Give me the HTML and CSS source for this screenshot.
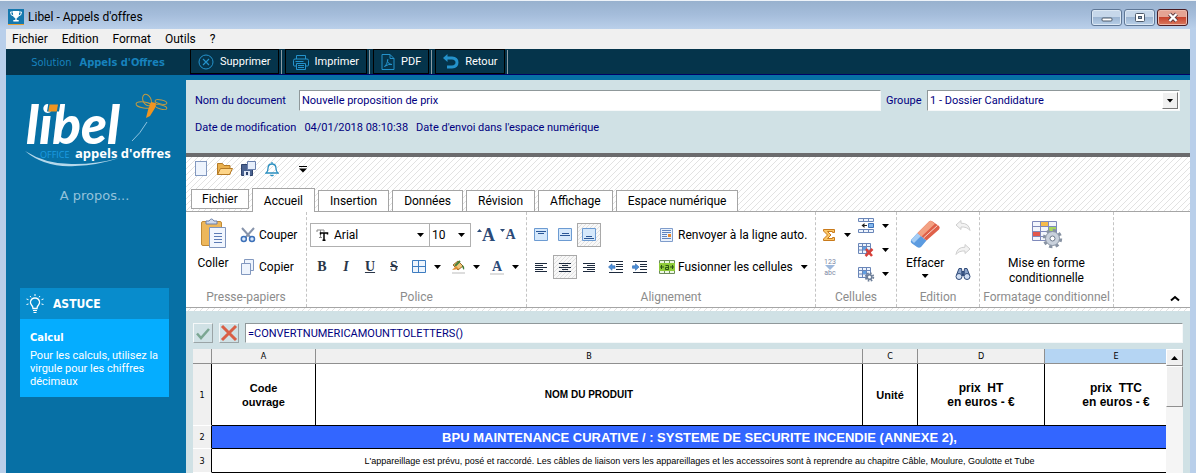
FILE: index.html
```html
<!DOCTYPE html>
<html lang="fr">
<head>
  <meta charset="UTF-8" />
  <meta name="viewport" content="width=device-width, initial-scale=1" />
  <title>Libel - Appels d'offres</title>
  <link rel="stylesheet" href="styles.css">
</head>
<body>

  <!-- Title bar -->
  <header class="titlebar">
    <svg class="app-icon" width="16" height="16" viewBox="0 0 16 16">
      <rect width="16" height="16" fill="#1578ae"/>
      <rect y="15" width="16" height="1" fill="#e8a13a"/>
      <path d="M5 2h6v3.500q0 3-2.300 3.800v1.700h2v1.500H5.300V11h2V9.300Q5 8.500 5 5.500z" fill="#fff"/>
      <path d="M5 3H2.500q0 4 3.500 4M11 3h2.500q0 4-3.500 4" fill="none" stroke="#fff"/>
    </svg>
    <span class="window-title">Libel - Appels d'offres</span>
    <div class="window-buttons">
      <button class="win-btn" aria-label="Réduire">
        <svg width="12" height="11" viewBox="0 0 12 11"><rect x="1" y="6" width="10" height="3" rx="1" fill="#fff" stroke="#4d5a6b"/></svg>
      </button>
      <button class="win-btn" aria-label="Agrandir">
        <svg width="12" height="11" viewBox="0 0 12 11"><rect x="1.500" y="1.500" width="9" height="8" rx="1" fill="#fff" stroke="#4d5a6b"/><rect x="4.500" y="4.500" width="3" height="2" fill="#8aa5c4" stroke="#4d5a6b"/></svg>
      </button>
      <button class="win-btn win-close" aria-label="Fermer">
        <svg width="12" height="11" viewBox="0 0 12 11"><path d="M2.500 2l7 7M9.500 2l-7 7" stroke="#5b3a40" stroke-width="4"/><path d="M2.500 2l7 7M9.500 2l-7 7" stroke="#fff" stroke-width="2.400"/></svg>
      </button>
    </div>
  </header>

  <div class="window">

    <nav class="menubar">
      <button>Fichier</button>
      <button>Edition</button>
      <button>Format</button>
      <button>Outils</button>
      <button>?</button>
    </nav>

    <div class="toolbar">
      <div class="brand">Solution <strong>Appels d'Offres</strong></div>
      <div class="actions">
        <button class="action">
          <svg width="16" height="16" viewBox="0 0 16 16" fill="none" stroke="#2492cb"><circle cx="8" cy="8" r="7"/><path d="M5 5l6 6M11 5l-6 6" stroke-width="1.200"/></svg>
          Supprimer
        </button>
        <button class="action">
          <svg width="16" height="16" viewBox="0 0 16 16" fill="none" stroke="#2492cb"><path d="M3.500 5V1.500h9V5M3.500 12H1.500Q.5 12 .5 11V6.500Q.5 5 2 5h12q1.500 0 1.500 1.500V11q0 1-1 1h-2"/><path d="M3.500 9.500h9v6h-9zM5 11.500h6M5 13.500h6M2.500 7.500h8"/></svg>
          Imprimer
        </button>
        <button class="action">
          <svg width="14" height="16" viewBox="0 0 14 16" fill="none" stroke="#2492cb"><path d="M1 .5h8l4 4v11H1zM9 .5v4h4"/><path d="M3.500 12.500Q6 11 7 5.500Q6 5 6.500 7.500Q7.500 10.500 11 10.500Q8 9.500 3.500 12.500"/></svg>
          PDF
        </button>
        <button class="action">
          <svg width="16" height="16" viewBox="0 0 16 16" fill="none" stroke="#2492cb"><path d="M3 4h6q5 .5 5 4.500T9 13H4" stroke-width="3"/><path d="M4.500 0v8L0 4z" fill="#2492cb" stroke="none"/></svg>
          Retour
        </button>
      </div>
    </div>

    <div class="main">

      <aside class="sidebar">
        <svg class="logo" width="152" height="78" viewBox="0 0 152 78">
          <text class="logo-name" x="6" y="54">libel</text>
          <path d="M28.500 12.500h12l-1.500 9h-12z" fill="#0770a5"/>
          <path d="M29.500 14.500h8.500l-1.200 7h-8.500z" fill="#ef9420"/>
          <text class="logo-office" x="20" y="68">OFFICE</text>
          <text class="logo-product" x="55" y="68">appels d'offres</text>
          <path d="M5 61q20 17 50 15q24-1 44-8q-22 6-44 6Q27 75 5 61z" fill="#b5d8eb"/>
          <path d="M112 51q8-7 15-19" fill="none" stroke="#8fc3df"/>
          <g fill="none" stroke="#c09a42">
            <ellipse cx="127" cy="10" rx="4" ry="6" transform="rotate(-25 127 10)"/>
            <ellipse cx="124" cy="15" rx="8" ry="3" transform="rotate(8 124 15)"/>
            <ellipse cx="141" cy="12" rx="6" ry="2" transform="rotate(12 141 12)"/>
            <ellipse cx="141" cy="17" rx="6" ry="2" transform="rotate(15 141 17)"/>
          </g>
          <path d="M131 12l5 1l-1 5l-5 8l-4 2l2-8z" fill="#ef9420"/>
        </svg>
        <a class="about" href="#">A propos...</a>

        <section class="tip">
          <h2 class="tip-title">
            <svg width="18" height="20" viewBox="0 0 18 20" fill="none" stroke="#fff"><path d="M7 14.500Q7 12.500 5.500 11Q4 9 4.500 7.500Q5.500 4 9 4t4.500 3.500Q14 9 12.500 11Q11 12.500 11 14.500z" stroke-width="1.300"/><path d="M7 16.500h4M7.500 18.500h3M9 0v2M4 2l1 1.300M14 2l-1 1.300M.5 5l2 .7M17.500 5l-2 .7M.5 10.500l2-.5M17.500 10.500l-2-.5"/></svg>
            ASTUCE
          </h2>
          <div class="tip-body">
            <h3>Calcul</h3>
            <p>Pour les calculs, utilisez la virgule pour les chiffres décimaux</p>
          </div>
        </section>
      </aside>

      <main class="content">

        <form class="document-form">
          <div class="field-row">
            <label class="name-label" for="docName">Nom du document</label>
            <input class="sunken name-input" id="docName" type="text" value="Nouvelle proposition de prix">
            <label class="group-label" for="docGroup">Groupe</label>
            <div class="sunken group-select">
              <select id="docGroup"><option>1 - Dossier Candidature</option></select>
              <span class="drop-button"><i class="caret"></i></span>
            </div>
          </div>
          <p class="dates"><span>Date de modification</span><span>04/01/2018 08:10:38</span><span>Date d'envoi dans l'espace numérique</span></p>
        </form>

        <section class="ribbon">
          <div class="quick-access">
            <button aria-label="Nouveau"><svg width="14" height="16" viewBox="0 0 14 16"><rect x="1.500" y=".5" width="11" height="14" fill="#eef4fd" stroke="#8298bf"/></svg></button>
            <button aria-label="Ouvrir"><svg width="17" height="16" viewBox="0 0 17 16"><path d="M1.500 13.500v-11h5l1.500 2h6v9z" fill="#e9b04e" stroke="#b57a25"/><path d="M1.500 13.500l3-6h12l-3 6z" fill="#fdd589" stroke="#b57a25"/></svg></button>
            <button aria-label="Enregistrer"><svg width="16" height="16" viewBox="0 0 16 16"><path d="M.5 3.500h11v11h-11z" fill="#4b6390" stroke="#2e426b"/><path d="M3 10h6v5H3z" fill="#dfe7f5"/><path d="M5 11h2v3H5z" fill="#2e426b"/><path d="M6.500 .5h8v8h-8z" fill="#e6eefb" stroke="#6a80ad"/></svg></button>
            <button aria-label="Alertes"><svg width="14" height="16" viewBox="0 0 14 16" fill="none" stroke="#2a8fc0" stroke-width="1.300"><path d="M1 12q2-1.500 2-4.500Q3 3 7 3t4 4.500Q11 10.500 13 12zM7 1v2M5.500 14q1.500 1.300 3 0"/></svg></button>
            <button class="more" aria-label="Personnaliser"><svg width="8" height="8" viewBox="0 0 8 8"><path d="M0 1.500h8" stroke="#000"/><path d="M0 3.500h8L4 7.500z"/></svg></button>
          </div>

          <div class="tabs" role="tablist">
            <button class="tab file-tab" role="tab">Fichier</button>
            <button class="tab selected" role="tab" aria-selected="true">Accueil</button>
            <button class="tab" role="tab">Insertion</button>
            <button class="tab" role="tab">Données</button>
            <button class="tab" role="tab">Révision</button>
            <button class="tab" role="tab">Affichage</button>
            <button class="tab" role="tab">Espace numérique</button>
          </div>

          <div class="groups">

            <!-- Presse-papiers -->
            <div class="group">
              <div class="group-body clipboard">
                <button class="big-btn">
                  <svg width="30" height="32" viewBox="0 0 30 32"><rect x="3.500" y="3.500" width="20" height="24" rx="1.500" fill="#edb75b" stroke="#c18a35"/><path d="M8 6V3h3q2.500-4 5 0h3v3z" fill="#cfdaed" stroke="#6b7fa8"/><path d="M11.500 9.500h16v20h-16z" fill="#f1f6fe" stroke="#7f95bd"/><path d="M16 15.500h8M16 18.500h8M16 21.500h8M16 24.500h8" stroke="#5c7bb5"/></svg>
                  Coller
                </button>
                <div class="stack">
                  <button class="text-btn"><svg width="16" height="16" viewBox="0 0 16 16"><path d="M2 1l8.500 9.500M14 1L5.500 10.500" stroke="#8794ab" stroke-width="2"/><circle cx="3.800" cy="12" r="2.500" fill="#dbe9fb" stroke="#3c70b8" stroke-width="1.500"/><circle cx="12" cy="12" r="2.500" fill="#dbe9fb" stroke="#3c70b8" stroke-width="1.500"/></svg>Couper</button>
                  <button class="text-btn"><svg width="16" height="16" viewBox="0 0 16 16" fill="#eef4fd" stroke="#8298bf"><path d="M4.500 .5h9v11h-9z"/><path d="M1.500 4.500h9v11h-9z"/></svg>Copier</button>
                </div>
              </div>
              <div class="group-name">Presse-papiers</div>
            </div>

            <!-- Police -->
            <div class="group">
              <div class="group-body stack">
                <div class="row">
                  <div class="combo font-combo">
                    <svg width="13" height="12" viewBox="0 0 13 12" fill="none"><path d="M1 3V1h7v2M4.500 1v7M3 8.500h3" stroke="#888"/><path d="M4.500 5.500V4h7v1.500M8 4v7M6.500 11.300h3" stroke="#000" stroke-width="1.500"/></svg>
                    <select aria-label="Police"><option>Arial</option></select>
                    <i class="caret"></i>
                  </div>
                  <div class="combo size-combo">
                    <select aria-label="Taille"><option>10</option></select>
                    <i class="caret"></i>
                  </div>
                  <button class="icon-btn grow" aria-label="Agrandir la police"><svg width="5" height="4" viewBox="0 0 5 4"><path d="M0 3h5L2.500 0z" fill="#2b4a78"/></svg>A</button>
                  <button class="icon-btn shrink" aria-label="Réduire la police"><svg width="5" height="4" viewBox="0 0 5 4"><path d="M0 0h5L2.500 3z" fill="#2b4a78"/></svg>A</button>
                </div>
                <div class="row">
                  <button class="icon-btn letter">B</button>
                  <button class="icon-btn letter italic">I</button>
                  <button class="icon-btn letter underline">U</button>
                  <button class="icon-btn letter strike">S</button>
                  <button class="split-btn" aria-label="Bordures"><svg width="14" height="14" viewBox="0 0 14 14"><path d="M.5 .5h13v12H.5zM.5 6.500h13M6.500 .5v12" fill="#eef5fd" stroke="#3d7cc0"/></svg><i class="caret"></i></button>
                  <button class="split-btn" aria-label="Remplissage"><svg width="15" height="15" viewBox="0 0 15 15"><path d="M2 5l5-4 5 5-5 4z" fill="#f2c67a" stroke="#9a6a2a"/><path d="M4 6L9 1" stroke="#49803a" stroke-width="2"/><path d="M11 5q3 1 2 5q-2-2-2-5z" fill="#3f7a35"/><path d="M1 10l4-4 3 3z" fill="#e08d33"/><path d="M1 13h13" stroke="#ddd" stroke-width="2"/></svg><i class="caret"></i></button>
                  <button class="split-btn color" aria-label="Couleur"><span>A</span><i class="caret"></i></button>
                </div>
              </div>
              <div class="group-name">Police</div>
            </div>

            <!-- Alignement -->
            <div class="group">
              <div class="group-body alignment">
                <div class="row">
                  <button class="icon-btn" aria-label="Haut"><svg width="14" height="14" viewBox="0 0 14 14"><path d="M.5 .5h13v12H.5z" fill="#d5e8fb" stroke="#6c9bd2"/><path d="M2 3.500h10M4 5.500h6" stroke="#2a5696"/></svg></button>
                  <button class="icon-btn" aria-label="Milieu"><svg width="14" height="14" viewBox="0 0 14 14"><path d="M.5 .5h13v12H.5z" fill="#d5e8fb" stroke="#6c9bd2"/><path d="M4 5.500h7M2 7.500h10" stroke="#2a5696"/></svg></button>
                  <button class="icon-btn pressed" aria-label="Bas"><svg width="14" height="14" viewBox="0 0 14 14"><path d="M.5 .5h13v12H.5z" fill="#d5e8fb" stroke="#6c9bd2"/><path d="M4 8.500h6M2 10.500h10" stroke="#2a5696"/></svg></button>
                </div>
                <button class="text-btn"><svg width="16" height="16" viewBox="0 0 16 16"><path d="M1.500 1.500h12v13h-12z" fill="#eaf2fd" stroke="#7f9ccb"/><path d="M3 3.500h9M3 5.500h9M3 7.500h5M3 9.500h5M3 11.500h9" stroke="#5f83bd"/><path d="M9 7h3v3H9z" fill="#e78a2e"/></svg>Renvoyer à la ligne auto.</button>
                <div class="row">
                  <button class="icon-btn" aria-label="Gauche"><svg width="12" height="11" viewBox="0 0 12 11"><path d="M0 1.500h12M0 3.500h8M0 5.500h12M0 7.500h8M0 9.500h12" stroke="#1d2a3d"/></svg></button>
                  <button class="icon-btn pressed" aria-label="Centrer"><svg width="12" height="11" viewBox="0 0 12 11"><path d="M0 1.500h12M3 3.500h6M0 5.500h12M3 7.500h6M0 9.500h12" stroke="#1d2a3d"/></svg></button>
                  <button class="icon-btn" aria-label="Droite"><svg width="12" height="11" viewBox="0 0 12 11"><path d="M0 1.500h12M4 3.500h8M0 5.500h12M4 7.500h8M0 9.500h12" stroke="#1d2a3d"/></svg></button>
                  <button class="icon-btn indent" aria-label="Diminuer le retrait"><svg width="16" height="12" viewBox="0 0 16 12"><path d="M1 .5h14M8 3.500h7M8 5.500h7M8 8.500h7M1 11.500h14" stroke="#1d2a3d"/><path d="M.5 6L4 2.800v2h3v2.500H4v2z" fill="#4d8fd8" stroke="#2c66ad" stroke-width=".6"/></svg></button>
                  <button class="icon-btn" aria-label="Augmenter le retrait"><svg width="16" height="12" viewBox="0 0 16 12"><path d="M1 .5h14M8 3.500h7M8 5.500h7M8 8.500h7M1 11.500h14" stroke="#1d2a3d"/><path d="M7 6L3.500 2.800v2h-3v2.500h3v2z" fill="#4d8fd8" stroke="#2c66ad" stroke-width=".6"/></svg></button>
                </div>
                <button class="text-btn"><svg width="16" height="14" viewBox="0 0 16 14"><path d="M.5 .5h15v13H.5z" fill="#eef7e4" stroke="#6d8c5a"/><path d="M5.500 0v3M10.500 0v3M5.500 11v3M10.500 11v3" stroke="#6d8c5a"/><path d="M0 3h16v8H0z" fill="#8fcb3a"/><path d="M1 7h4M11 7h4M2.500 5v4M13.500 5v4M6.500 5.500h3v4h-3v-2h3" stroke="#2b5415" fill="none"/></svg>Fusionner les cellules<i class="caret"></i></button>
              </div>
              <div class="group-name">Alignement</div>
            </div>

            <!-- Cellules -->
            <div class="group">
              <div class="group-body cells">
                <div class="stack">
                  <button class="split-btn" aria-label="Somme"><svg width="14" height="14" viewBox="0 0 14 14"><path d="M1.500 1.500h11v3h-2v-1H5.500L9 7l-3.500 3.500h5v-1h2v3h-11v-1.500L5.500 7l-4-4z" fill="#fbc766" stroke="#c97a1b"/></svg><i class="caret"></i></button>
                  <button class="icon-btn numbers" aria-label="Format de nombre"><span>123</span><svg width="10" height="5" viewBox="0 0 10 5"><path d="M0 0h10L5 5z" fill="#9db8dc"/></svg><span>abc</span></button>
                </div>
                <div class="triple">
                  <button class="split-btn" aria-label="Insérer"><svg width="17" height="16" viewBox="0 0 17 16"><path d="M.5 .5h15v3H.5zM5.500 .5v3M10.500 .5v3M.5 11.500h15v3H.5zM5.500 11.500v3M10.500 11.500v3" fill="#eef4fd" stroke="#6a86b8"/><path d="M10.500 5.500h5v4h-5z" fill="#82b6ec" stroke="#3c70b8"/><path d="M9 7.500H5" stroke="#222"/><path d="M6.500 5v5L3.500 7.500z" fill="#222"/></svg><i class="caret"></i></button>
                  <button class="split-btn" aria-label="Supprimer"><svg width="17" height="16" viewBox="0 0 17 16"><path d="M.5 1.500h12v10H.5zM.5 4.500h12M.5 8h12M4.500 1.500v10M8.500 1.500v10" fill="#eef4fd" stroke="#6a86b8"/><path d="M5 5h3v3H5z" fill="#62a0e2"/><path d="M8 7l6 7M14.500 7l-7 7" stroke="#d6403a" stroke-width="2.500"/></svg><i class="caret"></i></button>
                  <button class="split-btn" aria-label="Format"><svg width="17" height="16" viewBox="0 0 17 16"><path d="M.5 1.500h12v10H.5zM.5 4.500h12M.5 8h12M4.500 1.500v10M8.500 1.500v10" fill="#eef4fd" stroke="#6a86b8"/><path d="M5 5h3v3H5z" fill="#62a0e2"/><circle cx="11.500" cy="11" r="3.800" fill="none" stroke="#6e7f99" stroke-width="1.800" stroke-dasharray="1.600 1.400"/><circle cx="11.500" cy="11" r="2.300" fill="#fff" stroke="#6e7f99" stroke-width="1.600"/></svg><i class="caret"></i></button>
                </div>
              </div>
              <div class="group-name">Cellules</div>
            </div>

            <!-- Edition -->
            <div class="group">
              <div class="group-body editing">
                <button class="big-btn">
                  <svg width="32" height="32" viewBox="0 0 32 32"><path d="M2 22L8.500 15l9 7.500L12 29q-2 1.500-4 0l-5-3.500q-2-1.500-1-3.500z" fill="#5b9be0"/><path d="M2 22L8.500 15l3.500 3L5 25z" fill="#a5cdf5"/><path d="M8.500 15L20 3.500q1.500-1.500 3.500 0L30 8q1.500 1.500 0 3.500L17.500 22.500z" fill="#df6049"/><path d="M8.500 15L20 3.500q1.500-1.500 3 0l3 2.300L12.500 18.500z" fill="#f3a183"/><path d="M14.500 20L28.500 7.500" stroke="#f8d5cb"/></svg>
                  Effacer
                  <i class="caret"></i>
                </button>
                <div class="triple">
                  <button class="icon-btn" aria-label="Annuler"><svg width="16" height="14" viewBox="0 0 16 14"><path d="M1 6l5-4.500v2.700Q14 4 15 11.500Q12 7.500 6 8v2.500z" fill="#f2f2f2" stroke="#cfcfcf"/></svg></button>
                  <button class="icon-btn" aria-label="Rétablir"><svg width="16" height="14" viewBox="0 0 16 14"><path d="M15 6l-5-4.500v2.700Q2 4 1 11.500Q4 7.500 10 8v2.500z" fill="#f2f2f2" stroke="#cfcfcf"/></svg></button>
                  <button class="icon-btn" aria-label="Rechercher"><svg width="16" height="14" viewBox="0 0 16 14" stroke="#2f4a78"><path d="M1.500 8L4 1.500h2.500L7.500 9M14.500 8L12 1.500H9.500L8.500 9" fill="#8ea6cb"/><path d="M7 4.500h2v3H7z" fill="#4d6796"/><circle cx="4" cy="9.500" r="3" fill="#d2e0f4"/><circle cx="12" cy="9.500" r="3" fill="#d2e0f4"/></svg></button>
                </div>
              </div>
              <div class="group-name">Edition</div>
            </div>

            <!-- Formatage conditionnel -->
            <div class="group">
              <div class="group-body formatting">
                <button class="big-btn">
                  <svg width="32" height="32" viewBox="0 0 32 32"><path d="M1.500 3.500h24v19h-24z" fill="#f3f6fc"/><path d="M10 4h8v5h-8z" fill="#f6bb4c"/><path d="M18 9h7v5h-7z" fill="#a8d65c"/><path d="M2 13h8v5H2z" fill="#e2574c"/><path d="M1.500 3.500h24v19h-24zM1.500 8.500h24M1.500 13.500h24M1.500 18.500h24M9.500 3.500v19M17.500 3.500v19" stroke="#7f8abb" fill="none"/><circle cx="21.500" cy="20.500" r="8.200" fill="none" stroke="#8893a3" stroke-width="3" stroke-dasharray="3.300 3.140"/><circle cx="21.500" cy="20.500" r="7" fill="#c9d1dc" stroke="#8893a3"/><circle cx="21.500" cy="20.500" r="2.500" fill="#fff" stroke="#6f7b8c"/></svg>
                  Mise en forme<br>conditionnelle
                </button>
              </div>
              <div class="group-name">Formatage conditionnel</div>
            </div>

            <button class="collapse" aria-label="Réduire le ruban"><svg width="10" height="7" viewBox="0 0 10 7"><path d="M1 5.500L5 2l4 3.500" fill="none" stroke="#000" stroke-width="2"/></svg></button>
          </div>
        </section>

        <div class="formula-bar">
          <button class="formula-btn" aria-label="Valider"><svg width="16" height="16" viewBox="0 0 16 16"><path d="M2 8.500l4 4.500L14 4" fill="none" stroke="#7ba692" stroke-width="2.500"/></svg></button>
          <button class="formula-btn" aria-label="Annuler la saisie"><svg width="18" height="18" viewBox="0 0 18 18"><path d="M2 2l14 14M16 2L2 16" stroke="#d95f45" stroke-width="3"/></svg></button>
          <input class="sunken formula-input" type="text" aria-label="Formule" value="=CONVERTNUMERICAMOUNTTOLETTERS()">
        </div>

        <div class="sheet">
          <div class="sheet-view">
            <table>
              <colgroup>
                <col class="col-num"><col class="col-a"><col><col class="col-c"><col class="col-d"><col class="col-e">
              </colgroup>
              <thead>
                <tr><th></th><th>A</th><th>B</th><th>C</th><th>D</th><th class="active">E</th></tr>
              </thead>
              <tbody>
                <tr class="titles">
                  <th>1</th>
                  <td>Code<br>ouvrage</td>
                  <td class="product">NOM DU PRODUIT</td>
                  <td>Unité</td>
                  <td class="price">prix&nbsp; HT<br>en euros - €</td>
                  <td class="price">prix&nbsp; TTC<br>en euros - €</td>
                </tr>
                <tr class="section">
                  <th>2</th>
                  <td colspan="5">BPU MAINTENANCE CURATIVE / : SYSTEME DE SECURITE INCENDIE (ANNEXE 2),</td>
                </tr>
                <tr class="note">
                  <th>3</th>
                  <td colspan="5">L'appareillage est prévu, posé et raccordé. Les câbles de liaison vers les appareillages et les accessoires sont à reprendre au chapitre Câble, Moulure, Goulotte et Tube</td>
                </tr>
              </tbody>
            </table>
          </div>
          <div class="scrollbar">
            <button class="scroll-up" aria-label="Défiler vers le haut"><svg width="7" height="4" viewBox="0 0 7 4"><path d="M0 4h7L3.500 0z"/></svg></button>
            <div class="scroll-thumb"></div>
          </div>
        </div>

      </main>
    </div>
  </div>

</body>
</html>
```
FILE: styles.css
```css
* {
  box-sizing: border-box;
}
body {
  margin: 0;
  height: 100vh;
  overflow: hidden;
  display: flex;
  flex-direction: column;
  background: #b9cfea;
  font-family: Roboto, sans-serif;
  font-size: 11px;
  color: #000;
}

button, input, select {
  font: inherit;
  color: inherit;
}
button {
  padding: 0;
  border: none;
  background: none;
  white-space: nowrap;
}
svg {
  display: block;
  flex: none;
}

/* Title bar */
.titlebar {
  flex: none;
  height: 29px;
  display: flex;
  align-items: center;
  gap: 4px;
  padding: 4px 8px 0 8px;
  border-top: 1px solid #eef3f9;
  background: linear-gradient(#98b1ce, #a5bddb 50%, #bad0ea);
}
.window-title {
  font-size: 12px;
  flex: 1;
}
.window-buttons {
  display: flex;
  gap: 2px;
}
.win-btn {
  width: 31px;
  height: 17px;
  display: flex;
  align-items: center;
  justify-content: center;
  border: 1px solid #5f7796;
  border-radius: 3px;
  background: linear-gradient(#c6d7ea 50%, #9cb5d2 50%, #b8cfe8);
  box-shadow: inset 0 0 0 1px #dce8f4;
}
.win-close {
  border-color: #4a1c22;
  background: linear-gradient(#e5a494 50%, #c8442e 50%, #d97a5f);
  box-shadow: inset 0 0 0 1px #ecb9ab;
}

.window {
  flex: 1;
  min-height: 0;
  margin: 0 6px;
  display: flex;
  flex-direction: column;
}

.menubar {
  flex: none;
  height: 20px;
  display: flex;
  align-items: center;
  gap: 14px;
  padding: 0 6px;
  background: #f0f0f0;
  font-size: 12px;
}

/* Dark toolbar */
.toolbar {
  flex: none;
  height: 26px;
  display: flex;
  background: #05344b;
  color: #fff;
}
.brand {
  width: 184px;
  display: flex;
  align-items: center;
  justify-content: center;
  gap: 8px;
  font-family: "DejaVu Sans Condensed", "DejaVu Sans", sans-serif;
  color: #1782bd;
}
.actions {
  flex: 1;
  display: flex;
  gap: 6px;
  border-bottom: 1px solid #000066;
}
.action {
  display: flex;
  align-items: center;
  gap: 6px;
  height: 25px;
  padding: 0 7px;
  border: 1px solid #000;
  position: relative;
}
/* divider between two actions */
.action::after {
  content: "";
  position: absolute;
  top: 0;
  right: -4px;
  width: 1px;
  height: 24px;
  background: #8d9ca5;
}

.main {
  flex: 1;
  min-height: 0;
  display: flex;
}

/* Sidebar */
.sidebar {
  width: 180px;
  flex: none;
  display: flex;
  flex-direction: column;
  padding: 15px 17px 0 14px;
  background: #0770a5;
}
.logo-name {
  font: italic 900 53px Lato, sans-serif;
  fill: #fff;
}
.logo-office {
  font: 9px "Open Sans", sans-serif;
  fill: #1d9de2;
}
.logo-product {
  font: bold 13px "Open Sans", sans-serif;
  fill: #fff;
}
.about {
  align-self: center;
  margin-top: 20px;
  font-family: "DejaVu Sans", sans-serif;
  font-size: 13px;
  line-height: 16px;
  color: #94c2db;
  text-decoration: none;
}
.tip {
  margin-top: 84px;
  color: #fff;
}
.tip-title {
  margin: 0;
  height: 31px;
  display: flex;
  align-items: center;
  gap: 9px;
  padding-left: 6px;
  background: #088ccc;
  font-family: "DejaVu Sans Condensed", "DejaVu Sans", sans-serif;
  font-size: 12px;
}
.tip-body {
  padding: 11px 10px;
  height: 78px;
  background: #05adff;
}
.tip-body h3 {
  margin: 0 0 3px;
  font-family: "DejaVu Sans Condensed", "DejaVu Sans", sans-serif;
  font-size: 11px;
  line-height: 16px;
}
.tip-body p {
  margin: 0;
  line-height: 13px;
}

/* Document form */
.content {
  flex: 1;
  min-width: 0;
  display: flex;
  flex-direction: column;
  border-top: 5px solid #0770a5;
  background: #d0e1e5;
}
.sunken {
  border: 1px solid;
  border-color: #8f989a #f5f8f9 #f5f8f9 #8f989a;
  border-radius: 0;
  background: #fff;
}
.document-form {
  flex: none;
  height: 73px;
  padding: 10px 10px 0 9px;
  color: #000080;
}
.field-row {
  display: flex;
  align-items: center;
}
.name-label {
  width: 104px;
}
.name-input {
  flex: 1;
  min-width: 0;
  height: 21px;
  padding: 0 2px;
}
.group-label {
  width: 46px;
  padding-left: 5px;
}
.group-select {
  width: 253px;
  height: 21px;
  display: flex;
  align-items: center;
}
.group-select select {
  flex: 1;
  height: 19px;
  appearance: none;
  border: none;
  background: none;
  padding: 0 2px;
}
.drop-button {
  width: 16px;
  height: 17px;
  margin-right: 1px;
  display: flex;
  align-items: center;
  justify-content: center;
  border: 1px solid;
  border-color: #fff #777 #777 #fff;
  background: #f0f0f0;
}
.dates {
  display: flex;
  gap: 8px;
  margin: 10px 0 0;
  line-height: 14px;
}
.caret {
  flex: none;
  width: 7px;
  height: 4px;
  background: #000;
  clip-path: polygon(0 0, 100% 0, 50% 100%);
}

/* Ribbon */
.ribbon {
  flex: none;
  border-top: 4px solid #6b6b6d;
  padding-bottom: 3px;
  background: #fff linear-gradient(135deg, transparent 43%, #e2e2e2 50%, transparent 57%) 0 0 / 6px 6px;
  font-size: 12px;
}
.quick-access {
  height: 24px;
  display: flex;
  align-items: center;
  gap: 8px;
  padding-left: 8px;
}
.more {
  margin-left: 12px;
}
.tabs {
  height: 31px;
  display: flex;
  align-items: flex-end;
  gap: 3px;
  padding-left: 5px;
  border-bottom: 1px solid #a5a5a5;
}
.tab {
  height: 21px;
  padding: 0 11px;
  border: 1px solid #a5a5a5;
  border-bottom: none;
  background: #fff;
}
.file-tab {
  height: 20px;
  padding: 0 10px;
  margin-bottom: 2px;
  border-bottom: 1px solid #a5a5a5;
}
.tab.selected {
  height: 24px;
  margin-bottom: -1px;
}
.groups {
  height: 96px;
  display: grid;
  grid-template-columns: 121px 220px 289px 81px 83px 134px 1fr;
  border-bottom: 1px solid #a5a5a5;
  background: #fff;
}
.group {
  min-width: 0;
  display: flex;
  flex-direction: column;
  border-right: 1px dashed #c4c4c4;
}
.group-body {
  height: 76px;
}
.group-name {
  line-height: 18px;
  text-align: center;
  white-space: nowrap;
  color: #8c8c8c;
}
.row {
  display: flex;
  align-items: center;
  height: 24px;
}
.stack {
  display: flex;
  flex-direction: column;
  gap: 8px;
  padding-top: 11px;
}
.group-body.stack {
  padding-left: 3px;
}
.big-btn {
  display: flex;
  flex-direction: column;
  align-items: center;
  padding-top: 6px;
  line-height: 15px;
}
.big-btn svg {
  margin-bottom: 6px;
}
.text-btn {
  height: 24px;
  display: flex;
  align-items: center;
  gap: 3px;
}
.text-btn .caret {
  margin-left: 5px;
}
.icon-btn {
  width: 24px;
  height: 24px;
  display: flex;
  align-items: center;
  justify-content: center;
}
.icon-btn.pressed {
  border: 1px solid #a9a9a9;
  background: #f8f8f8 linear-gradient(135deg, transparent 40%, #e0e0e0 50%, transparent 60%) 0 0 / 4px 4px;
}
.split-btn {
  width: 39px;
  height: 24px;
  display: flex;
  align-items: center;
  justify-content: space-between;
  padding: 0 4px 0 6px;
}
.clipboard {
  display: flex;
  gap: 9px;
  padding-left: 9px;
}
.clipboard .big-btn {
  width: 36px;
}
.combo {
  height: 24px;
  display: flex;
  align-items: center;
  padding: 0 5px;
  border: 1px solid #b0b0b0;
  background: #fff;
}
.combo select {
  flex: 1;
  min-width: 0;
  padding: 0;
  border: none;
  background: none;
  appearance: none;
}
.font-combo {
  width: 120px;
  gap: 5px;
}
.size-combo {
  width: 41px;
  padding-left: 2px;
  border-left: none;
}
.grow, .shrink, .letter, .color {
  font-family: "Liberation Serif", serif;
  font-weight: bold;
}
.grow, .shrink {
  color: #2b4a78;
}
.grow svg, .shrink svg {
  align-self: flex-start;
  margin-top: 6px;
}
.grow {
  margin-left: 3px;
  font-size: 18px;
}
.shrink {
  width: 20px;
  font-size: 14px;
}
.letter {
  font-size: 14px;
  color: #2a3648;
}
.italic {
  font-style: italic;
}
.underline {
  text-decoration: underline;
}
.strike {
  text-decoration: line-through;
}
.color span {
  width: 14px;
  font-size: 14px;
  line-height: 13px;
  color: #2b4a78;
  border-bottom: 2px solid #ddd;
}
.alignment {
  display: grid;
  grid-template-columns: 130px 1fr;
  grid-auto-rows: 24px;
  row-gap: 8px;
  padding: 11px 0 0 2px;
}
.indent {
  margin-left: 3px;
}
.cells {
  display: flex;
}
.cells .stack .split-btn {
  width: 38px;
  padding-right: 3px;
}
.numbers {
  margin-left: 2px;
  flex-direction: column;
  font-size: 7px;
  line-height: 6px;
  color: #7d8aa5;
}
.triple {
  display: flex;
  flex-direction: column;
  padding-top: 2px;
}
.cells .triple .split-btn {
  width: 39px;
  padding-left: 4px;
}
.editing {
  display: flex;
  justify-content: space-between;
  padding: 0 4px 0 9px;
}
.formatting {
  display: flex;
  justify-content: center;
}
.editing .caret {
  margin-top: 3px;
}
.collapse {
  align-self: end;
  justify-self: end;
  padding: 0 10px 5px;
}

/* Formula bar */
.formula-bar {
  flex: none;
  display: flex;
  gap: 6px;
  padding: 12px 7px 6px;
  color: #000080;
}
.formula-btn {
  width: 20px;
  height: 20px;
  display: flex;
  align-items: center;
  justify-content: center;
  border: 1px solid;
  border-color: #f5f8f9 #9aa4a6 #9aa4a6 #f5f8f9;
}
.formula-input {
  flex: 1;
  min-width: 0;
  height: 20px;
  padding: 0 2px;
}

/* Spreadsheet */
.sheet {
  flex: 1;
  min-height: 0;
  display: flex;
  margin: 0 7px;
}
.sheet-view {
  flex: 1;
  min-width: 0;
  overflow: hidden;
  background: #fff;
}
/* the last column runs on under the scrollbar */
.sheet table {
  width: calc(100% + 22px);
  table-layout: fixed;
  border-collapse: separate;
  border-spacing: 0;
  text-align: center;
  font-family: "Liberation Sans", Arial, sans-serif;
}
.col-num { width: 19px; }
.col-a { width: 104px; }
.col-c { width: 55px; }
.col-d { width: 127px; }
.col-e { width: 143px; }

.sheet th, .sheet td {
  padding: 0;
  white-space: nowrap;
}
.sheet th {
  background: #f0f0f0;
  font: 9px "DejaVu Sans Condensed", sans-serif;
}
.sheet thead th {
  height: 15px;
  border-bottom: 1px solid #8f8f8f;
  border-right: 1px solid #8f8f8f;
}
.sheet thead th.active {
  background: #b5d5f3;
}
.sheet tbody th {
  border-bottom: 1px solid #fff;
  border-right: 1px solid #000;
}
.sheet td {
  border-right: 1px solid #000;
  border-bottom: 1px solid #000;
}
.titles td {
  height: 62px;
  font-size: 11px;
  font-weight: bold;
  line-height: 14px;
}
.titles .product {
  font-size: 10px;
}
.titles .price {
  font-size: 12px;
}
.section td {
  height: 23px;
  background: #3366ff;
  color: #fff;
  font-size: 13px;
  font-weight: bold;
}
.note td {
  height: 24px;
  font-size: 9px;
}

.scrollbar {
  width: 17px;
  display: flex;
  flex-direction: column;
  background: #f5f5f5;
}
.scroll-up, .scroll-thumb {
  border: 1px solid;
  border-color: #fff #8f8f8f #8f8f8f #fff;
  background: #f0f0f0;
}
.scroll-up {
  height: 17px;
  display: flex;
  align-items: center;
  justify-content: center;
}
.scroll-thumb {
  height: 41px;
}
```
